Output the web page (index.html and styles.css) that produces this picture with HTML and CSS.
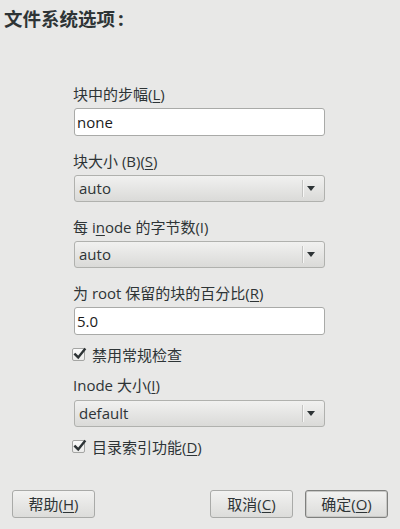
FILE: index.html
```html
<!DOCTYPE html>
<html lang="zh-CN">
<head>
<meta charset="utf-8">
<link rel="stylesheet" href="styles.css">
</head>
<body>
<div class="dialog">
  <div class="title">文件系统选项<span class="colon">:</span></div>
  <div class="form">
    <div class="label l1">块中的步幅(<u>L</u>)</div>
    <div class="entry">none</div>
    <div class="label">块大小 (B)(<u>S</u>)</div>
    <div class="combo"><span class="combo-text">auto</span><span class="sep"></span><span class="arrow"></span></div>
    <div class="label">每 i<u>n</u>ode 的字节数(I)</div>
    <div class="combo"><span class="combo-text">auto</span><span class="sep"></span><span class="arrow"></span></div>
    <div class="label">为 root 保留的块的百分比(<u>R</u>)</div>
    <div class="entry">5.0</div>
    <div class="check"><span class="box"><svg class="tick" width="16" height="16" viewBox="0 0 16 16"><path d="M3.2 8.4 L6.2 11.4 L12.6 3.4" fill="none" stroke="#2e3436" stroke-width="2.4" stroke-linecap="square" stroke-linejoin="miter"/></svg></span><span>禁用常规检查</span></div>
    <div class="label l5">Inode 大小(<u>I</u>)</div>
    <div class="combo"><span class="combo-text">default</span><span class="sep"></span><span class="arrow"></span></div>
    <div class="check"><span class="box"><svg class="tick" width="16" height="16" viewBox="0 0 16 16"><path d="M3.2 8.4 L6.2 11.4 L12.6 3.4" fill="none" stroke="#2e3436" stroke-width="2.4" stroke-linecap="square" stroke-linejoin="miter"/></svg></span><span>目录索引功能(<u>D</u>)</span></div>
  </div>
  <div class="buttons">
    <div class="btn">帮助(<u>H</u>)</div>
    <div class="spacer"></div>
    <div class="btn">取消(<u>C</u>)</div>
    <div class="btn default">确定(<u>O</u>)</div>
  </div>
</div>
</body>
</html>
```
FILE: styles.css
```css
html, body {
  margin: 0;
  padding: 0;
}
body {
  width: 400px;
  height: 529px;
  background: #e8e8e7;
  color: #2e3436;
  font-family: "Open Sans", "Noto Sans CJK SC", sans-serif;
  font-size: 15px;
  overflow: hidden;
}
u {
  text-decoration: underline;
  text-underline-offset: 2px;
  text-decoration-thickness: 1px;
}
.dialog {
  display: flex;
  flex-direction: column;
  height: 529px;
}
.title {
  padding: 7px 0 0 4px;
  font-size: 18.5px;
  font-weight: bold;
  line-height: 24px;
  color: #2e3436;
  white-space: nowrap;
}
.colon {
  margin-left: 3px;
  font-size: 20px;
}
.form {
  display: flex;
  flex-direction: column;
  margin: 53px 0 0 74px;
  width: 251px;
}
.label {
  line-height: 20px;
  height: 20px;
  margin: 15px 0 4px -1px;
  white-space: nowrap;
}
.label.l1 {
  margin-top: 0;
}
.label.l5 {
  margin-top: 10px;
  margin-bottom: 5px;
}
.entry {
  box-sizing: border-box;
  height: 28px;
  background: #ffffff;
  border: 1px solid #a9aaa8;
  border-radius: 3px;
  padding: 0 0 0 2px;
  line-height: 26px;
  color: #1a1a1a;
}
.combo {
  box-sizing: border-box;
  height: 27px;
  border: 1px solid #b0b1ae;
  border-radius: 3px;
  background: linear-gradient(#f1f1f0, #dadad8);
  display: flex;
  align-items: center;
  padding-left: 4px;
}
.combo-text {
  flex: 1;
  line-height: 25px;
  color: #2e3436;
}
.sep {
  width: 1px;
  height: 17px;
  background: #c4c4c2;
  border-right: 1px solid #f6f6f5;
  margin-right: 3px;
}
.arrow {
  width: 0;
  height: 0;
  border-left: 4px solid transparent;
  border-right: 4px solid transparent;
  border-top: 5px solid #2e3436;
  margin-right: 9px;
}
.check {
  display: flex;
  align-items: center;
  height: 20px;
  line-height: 20px;
  margin: 10px 0 0 -2px;
  gap: 7px;
  white-space: nowrap;
}
.box {
  position: relative;
  box-sizing: border-box;
  width: 13px;
  height: 13px;
  border: 1px solid #a4a5a3;
  border-radius: 2px;
  background: linear-gradient(#fbfbfb, #ebebea);
  margin-top: -1px;
}
.tick {
  position: absolute;
  left: -1px;
  top: -3px;
  display: block;
}
.buttons {
  display: flex;
  margin-top: 33px;
  padding: 0 12px;
  gap: 12px;
}
.spacer {
  flex: 1;
}
.btn {
  box-sizing: border-box;
  width: 83px;
  height: 28px;
  border: 1px solid #a9aaa8;
  border-radius: 3px;
  background: linear-gradient(#f2f2f1, #dcdcda);
  text-align: center;
  line-height: 26px;
  color: #2e3436;
}
.btn.default {
  border-color: #7f807e;
  box-shadow: inset 0 0 0 1px #c8c8c6;
}
```
